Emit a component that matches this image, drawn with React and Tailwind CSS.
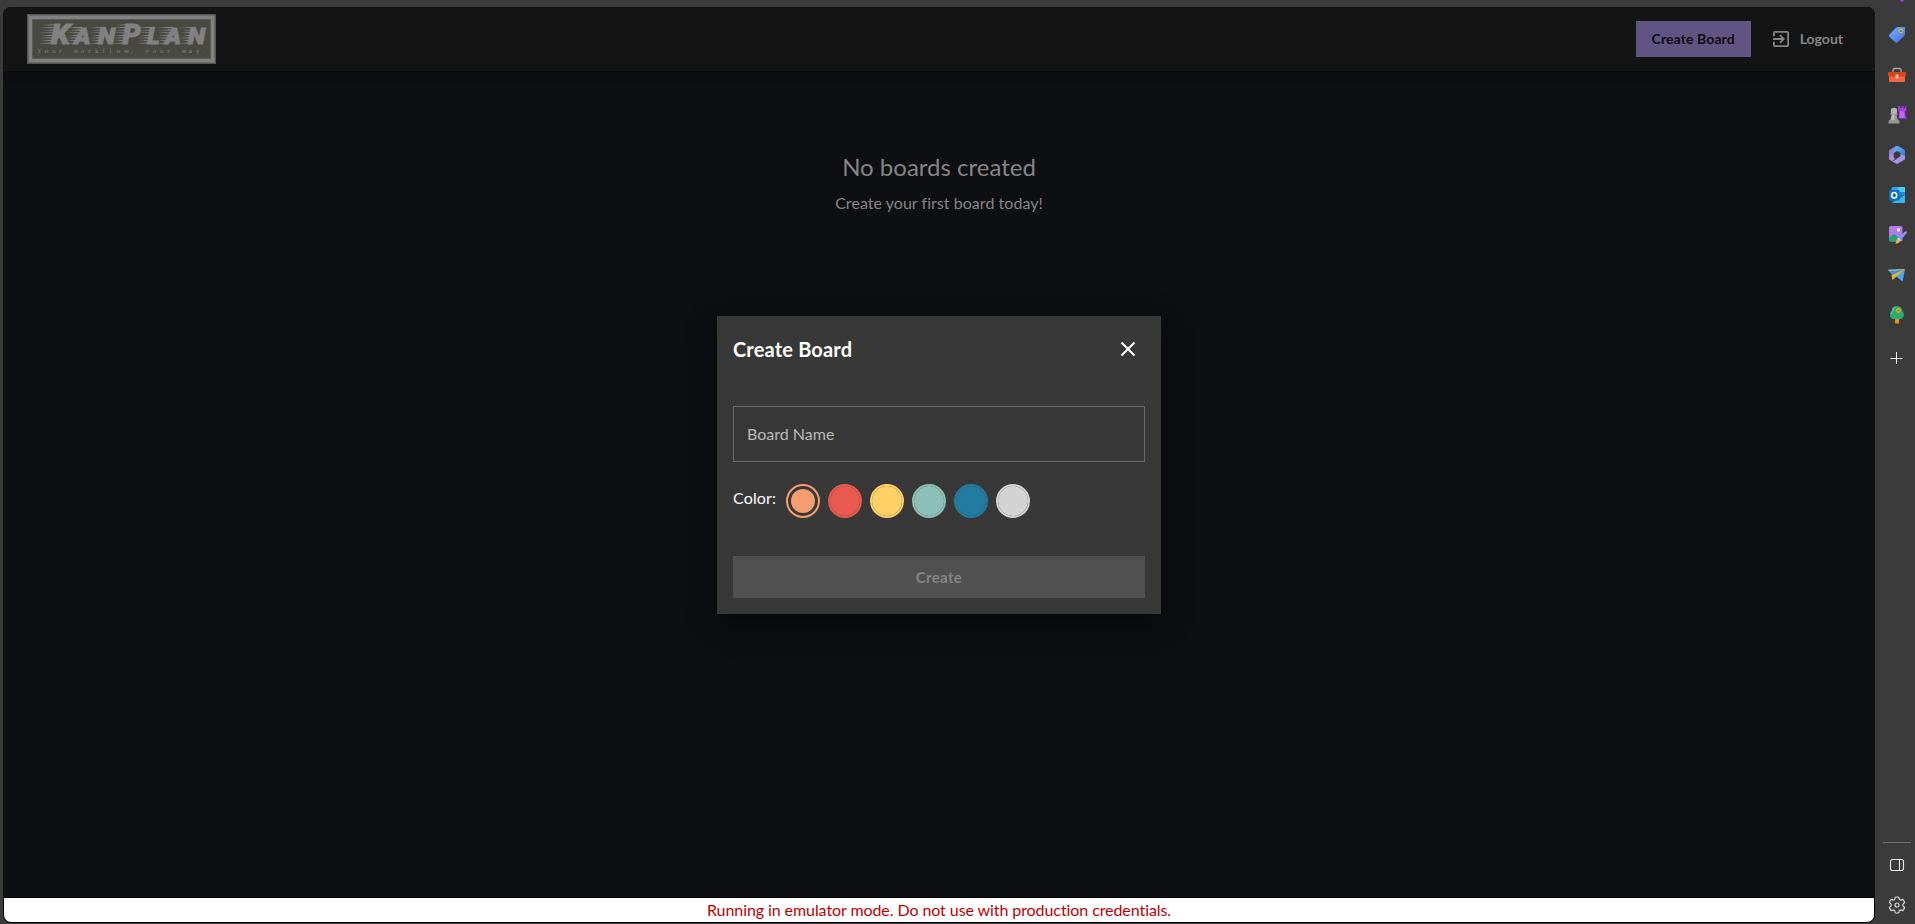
import React from "react";

const logoLetters = [
  { ch: "K", x: 51, size: 28, from: 38, top: 24, w: 19 },
  { ch: "A", x: 74.5, size: 22.5, from: 65, top: 27, w: 16 },
  { ch: "N", x: 98, size: 22.5, from: 89, top: 27, w: 17 },
  { ch: "P", x: 122.5, size: 28, from: 112, top: 24, w: 18 },
  { ch: "L", x: 147.5, size: 22.5, from: 137, top: 27, w: 12 },
  { ch: "A", x: 165, size: 22.5, from: 156, top: 27, w: 16 },
  { ch: "N", x: 188, size: 22.5, from: 179, top: 27, w: 17 },
];

const tagline = "Your workflow, your way.";
const taglineX = tagline
  .split("")
  .map((_, i) => (37.5 + i * 7.2).toFixed(1))
  .join(" ");

function Logo() {
  return (
    <svg width="189" height="50" viewBox="27 14 189 50" className="block">
      <rect x="27" y="14" width="189" height="50" fill="#55564f" />
      <rect x="28" y="15" width="187" height="48" fill="#6a6a66" />
      <rect x="29" y="16" width="185" height="46" fill="#818181" />
      <rect x="32" y="19" width="179" height="40" fill="#5b5c54" />
      <rect x="33" y="20" width="177" height="38" fill="#484940" />
      {logoLetters.map((l, i) => (
        <g key={i}>
          {[0, 1, 2, 3, 4, 5, 6, 7].map((n) => {
            const y = 43.2 - n * 2.6;
            if (y < l.top) return null;
            const end = l.x + 3 + n * 0.8;
            return <path key={n} d={`M${l.from + (n % 2) * 2 + n * 0.3} ${y}L${end} ${y - 0.9}V${y + 0.8}Z`} fill="#818181" />;
          })}
          <text
            x={l.x}
            y="43.7"
            fontFamily="Roboto, sans-serif"
            fontWeight="900"
            fontStyle="italic"
            fontSize={l.size}
            fill="#818181"
            stroke="#818181"
            strokeWidth="1"
            textLength={l.w}
            lengthAdjust="spacingAndGlyphs"
          >
            {l.ch}
          </text>
        </g>
      ))}
      <text x={taglineX} y="52.5" fontFamily="'DejaVu Serif', serif" fontSize="6" fill="#858580">
        {tagline}
      </text>
    </svg>
  );
}

function Tag() {
  return (
    <svg width="20" height="20" viewBox="0 0 20 20">
      <defs>
        <linearGradient id="tag" x1="0" y1="0" x2="1" y2="1">
          <stop offset="0" stopColor="#74b6fb" />
          <stop offset="1" stopColor="#4966e8" />
        </linearGradient>
      </defs>
      <path d="M10.500 2H17q1 0 1 1v6q0 1-.7 1.700l-6.600 6.500q-1.200 1.100-2.400 0L2.500 12q-1.100-1.200 0-2.400L9 2.700Q9.600 2 10.500 2Z" fill="url(#tag)" />
      <circle cx="14" cy="6" r="1.600" fill="#3f5a91" stroke="#e9c51a" strokeWidth="1.200" />
    </svg>
  );
}

function Toolbox() {
  return (
    <svg width="20" height="20" viewBox="0 0 20 20">
      <path d="M6 7V5q0-1.500 1.500-1.500h5Q14 3.500 14 5v2" fill="none" stroke="#aaa9a8" strokeWidth="1.300" />
      <path d="M2 11h16v5q0 1-1 1H3q-1 0-1-1Z" fill="#ee6540" />
      <rect x="1" y="7" width="18" height="4.500" rx=".8" fill="#da4318" />
      <path d="M8.500 9.500h3v3l-1.500 1.500-1.500-1.500Z" fill="#bcc2c4" />
    </svg>
  );
}

function Chess() {
  return (
    <svg width="20" height="20" viewBox="0 0 20 20">
      <path d="M11 1h2v2h1.500V1h2v2H18V1h1.200v4.500L18 6.500l.5 4.500 1 1v1.800h-8L12.300 6.500 11 5.500Z" fill="#a43be5" />
      <path d="M12.700 6h4.300l.6 7h-5Z" fill="#c266f6" />
      <path d="M3.500 8h7v2H9.700l.8 4.300 2 1.700v2.500h-11V16l2-1.700L4.300 10h-.8Z" fill="#999795" />
      <circle cx="7" cy="6" r="3.200" fill="#b5b3b0" />
      <path d="M5 10h2.300v5H4.200Z" fill="#bdbbb8" />
    </svg>
  );
}

function Hexagon() {
  return (
    <svg width="20" height="20" viewBox="0 0 20 20">
      <defs>
        <linearGradient id="hexa" x1="0" y1="0" x2="0" y2="1">
          <stop offset="0" stopColor="#6f79cc" />
          <stop offset="1" stopColor="#c18fe0" />
        </linearGradient>
        <linearGradient id="hexb" x1="0" y1="0" x2="1" y2="1">
          <stop offset="0" stopColor="#57c5ed" />
          <stop offset="1" stopColor="#4266d3" />
        </linearGradient>
        <linearGradient id="hexc" x1="0" y1="0" x2="1" y2="0">
          <stop offset="0" stopColor="#b98be0" />
          <stop offset="1" stopColor="#8f9be6" />
        </linearGradient>
      </defs>
      <path d="M9.500 1 3 4.500Q2 5.200 2 6.300v7.200q0 1 1 1.600l2 1L8 14 6.700 12V8L11 4Z" fill="url(#hexa)" />
      <path d="M8 2q2-1.600 3.500-.8L17 4.500q1 .7 1 1.800V12l-4.500-2V8L10 6 6.700 8Q6.300 4 8 2Z" fill="url(#hexb)" />
      <path d="M18 11v2.500q0 1-1 1.600l-6 3.400q-1 .5-2 0l-5-2.800q3 .4 5-1.500l4.500-3V9Z" fill="url(#hexc)" />
    </svg>
  );
}

function Outlook() {
  return (
    <svg width="20" height="20" viewBox="0 0 20 20">
      <path d="M6 2h11q1 0 1 1v8H4.500V3.500Q4.500 2 6 2Z" fill="#28a8ea" />
      <path d="M11 2h6q1 0 1 1v4h-7Z" fill="#4fcdf7" />
      <path d="M11 7h7v5h-7Z" fill="#1490df" />
      <path d="M4.500 10H18v7q0 1-1 1H5.500q-1 0-1-1Z" fill="#0f6dba" />
      <path d="m18 10-13 8h12q1 0 1-1Z" fill="#35b8f1" />
      <rect x="2" y="5" width="10.500" height="10.500" rx="1" fill="#0f70c7" />
      <ellipse cx="7.200" cy="10.200" rx="2.500" ry="2.800" fill="none" stroke="#fff" strokeWidth="1.500" />
    </svg>
  );
}

function ImageBrush() {
  return (
    <svg width="20" height="20" viewBox="0 0 20 20">
      <rect x="2" y="1" width="13.500" height="15.500" rx="1.800" fill="#b579ec" />
      <path d="M2 13 6 9.500q1-.8 2 0l5 4v3H4q-2 0-2-2Z" fill="#22a478" />
      <circle cx="11.500" cy="4.800" r="1.600" fill="#fff" />
      <path d="m11 13 7-6.500q1-.6 1.700.1.700.8 0 1.600L13.700 15Z" fill="#8b91f0" />
      <path d="m11.300 12.500 2.700 2.500-1.800 1.200-2.300-2.200Z" fill="#d8d6e6" />
      <path d="M8 18.500q1.300-1 1.200-2.500.4-2.200 2.200-1.600 2 .9.900 2.900-1.400 1.700-4.300 1.200Z" fill="#f9b12f" />
    </svg>
  );
}

function Plane() {
  return (
    <svg width="20" height="20" viewBox="0 0 20 20">
      <path d="M1 4.800 18 4 5.500 10.800Z" fill="#3a97ef" />
      <path d="M18 4 8.500 11l7 5.500Z" fill="#4da6f5" />
      <path d="M18 4 4.500 10.500 5.500 15Z" fill="#f5b61b" />
      <path d="M18 4 5.500 15l3.500-3Z" fill="#2372c8" />
      <path d="m1 4.800 17-.9-2 1.200L2 5.900Z" fill="#bdb97a" />
    </svg>
  );
}

function Tree() {
  return (
    <svg width="20" height="20" viewBox="0 0 20 20">
      <rect x="8" y="13" width="4" height="5.500" rx=".6" fill="#e7930e" />
      <path d="M10 1q4.500 0 5.200 4.500 2.300 2.300 1.600 5.500-.8 3-4 3H7q-3.600 0-4-3.300Q3 7.800 4.800 5.500 5.500 1 10 1Z" fill="#29ad75" />
      <path d="M8.500 2Q5.500 3 6 6L3.800 9" fill="none" stroke="#53cc90" strokeWidth="1.300" />
      <path d="M11.500 3v5M9 5.500h5" stroke="#f6a413" strokeWidth="2.200" />
      <circle cx="11.500" cy="5.500" r=".8" fill="#a56609" />
    </svg>
  );
}

function PanelIcon() {
  return (
    <svg width="16" height="16" viewBox="0 0 16 16" fill="none" stroke="#eee" strokeWidth="1.100">
      <rect x="1.500" y="2.500" width="13" height="11" rx="2" />
      <path d="M10.500 2.500v11" />
    </svg>
  );
}

function Gear() {
  return (
    <svg width="20" height="20" viewBox="0 0 20 20" fill="none" stroke="#ddd" strokeWidth="1.150" strokeLinejoin="round">
      <path d="M8.200 2.200Q10 1.800 11.800 2.200L12.300 4.500 13.500 5.100 15.800 4.400Q17.100 5.700 17.600 7.500L15.900 9.100V10.900L17.600 12.500Q17.100 14.300 15.800 15.600L13.500 14.900 12.300 15.500 11.800 17.800Q10 18.200 8.200 17.800L7.700 15.500 6.500 14.900 4.200 15.600Q2.900 14.300 2.400 12.500L4.100 10.900V9.100L2.400 7.500Q2.900 5.700 4.200 4.400L6.500 5.100 7.700 4.500Z" />
      <circle cx="10" cy="10" r="2" />
    </svg>
  );
}

function Sidebar() {
  const items = [Tag, Toolbox, Chess, Hexagon, Outlook, ImageBrush, Plane, Tree];
  return (
    <aside className="flex w-10 flex-col items-center pl-1">
      <svg width="20" height="15" viewBox="0 0 20 15" className="block">
        <path d="M12.500 0h5l-1 .8-1.500 1.400-1.500-1.400Z" fill="#a934ed" />
      </svg>
      {items.map((Icon, i) => (
        <div key={i} className="flex h-10 items-center">
          <Icon />
        </div>
      ))}
      <div className="flex h-[46px] items-center">
        <svg width="14" height="14" viewBox="0 0 14 14" stroke="#ececec" strokeWidth="1">
          <path d="M6.500 1v12M.5 7.500h12" />
        </svg>
      </div>
      <div className="mt-auto h-px w-7 bg-[#707070]" />
      <div className="flex h-11 items-center">
        <PanelIcon />
      </div>
      <div className="mb-[5px] mt-1 flex h-7 items-center">
        <Gear />
      </div>
    </aside>
  );
}

const swatches = ["bg-[#f59e6f]", "bg-[#e85a4f]", "bg-[#ffd166]", "bg-[#8cbfb7]", "bg-[#247ba0]", "bg-[#d3d3d3]"];
const rings = ["border-[#f59e6f]", "border-[#e85a4f]", "border-[#ffd166]", "border-[#8cbfb7]", "border-[#247ba0]", "border-[#d3d3d3]"];

function Modal() {
  return (
    <section className="h-[298px] w-[444px] bg-[#383838] p-4 shadow-[0_11px_15px_-7px_rgba(0,0,0,0.2),0_12px_24px_3px_rgba(0,0,0,0.14),0_9px_32px_6px_rgba(0,0,0,0.1)]">
      <div className="flex h-[34px] items-center justify-between pr-2">
        <h2 className="text-xl font-bold tracking-[0.17px] text-white">Create Board</h2>
        <svg width="18" height="18" viewBox="0 0 18 18" stroke="#fff" strokeWidth="2" className="block">
          <path d="m2.500 2.500 13 13m0-13-13 13" />
        </svg>
      </div>
      <div className="mt-10 flex h-14 items-center border border-[#6a6a6a] px-[13px] text-base text-[#b9b9b9]">Board Name</div>
      <div className="mt-[22px] flex h-[34px] items-start">
        <span className="mr-[9px] w-11 whitespace-nowrap pt-0.5 text-base tracking-[0.15px] text-white">Color:</span>
        <div className="flex gap-2">
          {swatches.map((bg, i) => (
            <div key={bg} className={`size-[34px] rounded-full border-2 ${rings[i]} ${i === 0 ? "p-[3px]" : ""}`}>
              <div className={`size-full rounded-full ${bg}`} />
            </div>
          ))}
        </div>
      </div>
      <button className="mt-[38px] h-[42px] w-full bg-[#505050] text-[15px] font-bold tracking-[0.35px] text-[#858585]">Create</button>
    </section>
  );
}

export default function App() {
  return (
    <div className="flex h-[924px] w-[1915px] overflow-hidden bg-[#3b3b3b] pl-[3px] font-['Lato',sans-serif]">
      <div className="mb-px mt-[7px] flex w-[1872px] flex-col overflow-hidden rounded-[8px] bg-[#0e0f13]">
        <header className="flex h-16 shrink-0 items-center justify-between bg-[#141414] pl-6 pr-8 shadow-[0_2px_8px_rgba(0,0,0,0.25)]">
          <Logo />
          <div className="flex items-center">
            <button className="h-9 w-[115px] bg-[#625482] text-sm font-bold tracking-[0.1px] text-[#0c0a12]">Create Board</button>
            <div className="ml-[22px] flex items-center gap-[11px]">
              <svg width="16" height="16" viewBox="3 3 18 18" fill="#858585" className="block">
                <path d="M10.090 15.590 11.500 17l5-5-5-5-1.410 1.410L12.670 11H3v2h9.670zM19 3H5a2 2 0 0 0-2 2v4h2V5h14v14H5v-4H3v4a2 2 0 0 0 2 2h14c1.100 0 2-.9 2-2V5c0-1.100-.9-2-2-2z" />
              </svg>
              <span className="text-sm font-bold text-[#858585]">Logout</span>
            </div>
          </div>
        </header>
        <main className="flex grow flex-col items-center pt-[78px] text-[#858585]">
          <h1 className="text-2xl leading-9">No boards created</h1>
          <p className="mt-1.5 text-base leading-6 tracking-[0.04px]">Create your first board today!</p>
        </main>
        <footer className="h-[26px] shrink-0 overflow-hidden rounded-b-[8px] border border-black bg-white text-center text-base leading-6 tracking-[-0.08px] text-[#c00000]">
          Running in emulator mode. Do not use with production credentials.
        </footer>
      </div>
      <Sidebar />
      <div className="absolute left-[717px] top-[316px]">
        <Modal />
      </div>
    </div>
  );
}
